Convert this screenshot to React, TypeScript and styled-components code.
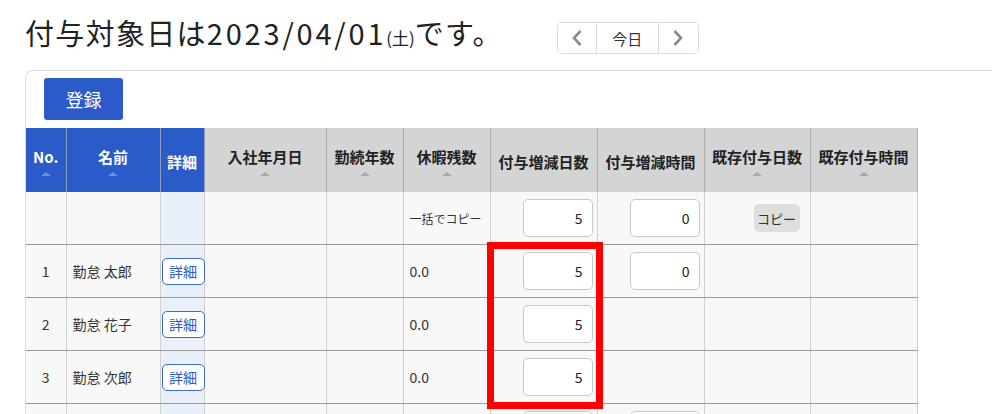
import styled, { createGlobalStyle } from "styled-components"

const GlobalStyle = createGlobalStyle`
  html, body {
    margin: 0;
    padding: 0;
    overflow: hidden;
    background: #fff;
    font-family: "Noto Sans CJK JP", "Noto Sans", sans-serif;
    color: #222;
  }
`

type Col = { label: string; width: number; blue?: boolean; sort?: boolean }

const columns: Col[] = [
  { label: "No.", width: 40, blue: true, sort: true },
  { label: "名前", width: 94, blue: true, sort: true },
  { label: "詳細", width: 44, blue: true },
  { label: "入社年月日", width: 122, sort: true },
  { label: "勤続年数", width: 77, sort: true },
  { label: "休暇残数", width: 87, sort: true },
  { label: "付与増減日数", width: 107 },
  { label: "付与増減時間", width: 107 },
  { label: "既存付与日数", width: 106, sort: true },
  { label: "既存付与時間", width: 107, sort: true },
]

type Row = { no?: number; name?: string; rest?: string; days: string; hours?: string }

const rows: Row[] = [
  { no: 1, name: "勤怠 太郎", rest: "0.0", days: "5", hours: "0" },
  { no: 2, name: "勤怠 花子", rest: "0.0", days: "5" },
  { no: 3, name: "勤怠 次郎", rest: "0.0", days: "5" },
  { days: "5", hours: "0" },
]

export default function App() {
  return (
    <>
      <GlobalStyle />
      <Page>
        <TitleBar>
          <Title>
            付与対象日は<DateText>2023/04/01</DateText>
            <Weekday>(土)</Weekday>です。
          </Title>
          <NavGroup>
            <NavButton $narrow>
              <svg width="14" height="18" viewBox="0 0 14 18">
                <polyline points="10.5,2 4,9 10.5,16" fill="none" stroke="#8a8a8a" strokeWidth="2.6" />
              </svg>
            </NavButton>
            <NavButton>今日</NavButton>
            <NavButton $narrow>
              <svg width="14" height="18" viewBox="0 0 14 18">
                <polyline points="3.5,2 10,9 3.5,16" fill="none" stroke="#8a8a8a" strokeWidth="2.6" />
              </svg>
            </NavButton>
          </NavGroup>
        </TitleBar>

        <Card>
          <RegisterButton>登録</RegisterButton>
          <TableWrap>
            <Table>
              <colgroup>
                {columns.map((c) => (
                  <col key={c.label} style={{ width: c.width }} />
                ))}
              </colgroup>
              <thead>
                <tr>
                  {columns.map((c) => (
                    <Th key={c.label} $blue={c.blue}>
                      <HeadInner>
                        <span>{c.label}</span>
                        {c.sort && <SortArrow $blue={c.blue} />}
                      </HeadInner>
                    </Th>
                  ))}
                </tr>
              </thead>
              <tbody>
                <tr>
                  <Td />
                  <Td />
                  <DetailTd />
                  <Td />
                  <Td />
                  <Td><SmallNote>一括でコピー</SmallNote></Td>
                  <InputTd><NumInput defaultValue="5" /></InputTd>
                  <InputTd><NumInput defaultValue="0" /></InputTd>
                  <Td $align="right"><CopyButton>コピー</CopyButton></Td>
                  <Td />
                </tr>
                {rows.map((r, i) => (
                  <tr key={i}>
                    <Td $align="center">{r.no}</Td>
                    <Td>{r.name}</Td>
                    <DetailTd>{r.name && <DetailButton>詳細</DetailButton>}</DetailTd>
                    <Td />
                    <Td />
                    <Td>{r.rest}</Td>
                    <InputTd><NumInput defaultValue={r.days} /></InputTd>
                    <InputTd>{r.hours !== undefined && <NumInput defaultValue={r.hours} />}</InputTd>
                    <Td />
                    <Td />
                  </tr>
                ))}
              </tbody>
            </Table>
            <Highlight />
          </TableWrap>
        </Card>
      </Page>
    </>
  )
}

const Page = styled.div`
  padding: 12px 0 0 25px;
`

const TitleBar = styled.div`
  display: flex;
  align-items: flex-start;
  height: 40px;
`

const Title = styled.h1`
  margin: 0;
  height: 40px;
  font-size: 29px;
  font-weight: normal;
  line-height: 40px;
  letter-spacing: 1.3px;
  color: #222;
  white-space: nowrap;
`

const DateText = styled.span`
  letter-spacing: 2.8px;
`

const Weekday = styled.span`
  font-size: 17px;
  line-height: 1;
  letter-spacing: 0;
`

const NavGroup = styled.div`
  display: flex;
  margin: 10px 0 0 54px;
  border: 1px solid #ddd;
  border-radius: 5px;
  height: 32px;
  box-sizing: border-box;
  overflow: hidden;
`

const NavButton = styled.button<{ $narrow?: boolean }>`
  width: ${(p) => (p.$narrow ? "39px" : "62px")};
  border: none;
  border-right: 1px solid #ddd;
  background: #fff;
  font-family: inherit;
  font-size: 15px;
  color: #333;
  display: flex;
  align-items: center;
  justify-content: center;
  padding: 0;
  &:last-child {
    border-right: none;
  }
`

const Card = styled.div`
  margin-top: 18px;
  margin-right: -20px;
  border: 1px solid #ddd;
  border-right: none;
  border-radius: 8px 0 0 0;
  padding-top: 7px;
  height: 400px;
`

const RegisterButton = styled.button`
  display: block;
  margin-left: 18px;
  width: 79px;
  height: 42px;
  border: none;
  border-radius: 3px;
  background: #2a5bc8;
  color: #fff;
  font-family: inherit;
  font-size: 18px;
`

const TableWrap = styled.div`
  position: relative;
  margin-top: 8px;
`

const Table = styled.table`
  border-collapse: collapse;
  table-layout: fixed;
  width: 891px;
  font-size: 14px;
`

const Th = styled.th<{ $blue?: boolean }>`
  height: 64px;
  padding: 0 2px;
  background: ${(p) => (p.$blue ? "#2a5bc8" : "#d3d5d5")};
  color: ${(p) => (p.$blue ? "#fff" : "#222")};
  border-right: 1px solid ${(p) => (p.$blue ? "#8d9cc0" : "#aeb0b0")};
  font-size: 15px;
  font-weight: bold;
  vertical-align: middle;
  white-space: nowrap;
`

const HeadInner = styled.div`
  display: flex;
  flex-direction: column;
  align-items: center;
  line-height: 20px;
  margin-top: 4px;
`

const SortArrow = styled.span<{ $blue?: boolean }>`
  display: block;
  width: 0;
  height: 0;
  margin-top: 5px;
  margin-bottom: 2px;
  border-left: 5px solid transparent;
  border-right: 5px solid transparent;
  border-bottom: 4px solid ${(p) => (p.$blue ? "#6f8fd6" : "#a9abab")};
`

const Td = styled.td<{ $align?: "left" | "center" | "right" }>`
  height: 52px;
  padding: 0 6px;
  background: #f8f8f8;
  border-right: 1px solid #cfcfcf;
  border-bottom: 1px solid #9a9a9a;
  text-align: ${(p) => p.$align ?? "left"};
  color: #333;
  white-space: nowrap;
  ${(p) => (p.$align === "right" ? "padding-right: 10px;" : "")}
`

const DetailTd = styled(Td)`
  background: #e8f0fc;
  padding: 0 0 0 1px;
`

const InputTd = styled(Td)`
  text-align: right;
  padding-right: 4px;
`

const NumInput = styled.input`
  width: 70px;
  height: 38px;
  box-sizing: border-box;
  border: 1px solid #c8c8c8;
  border-radius: 5px;
  padding: 0 9px;
  text-align: right;
  font-family: inherit;
  font-size: 14px;
  color: #222;
  background: #fff;
  vertical-align: middle;
`

const SmallNote = styled.span`
  font-size: 12px;
  color: #333;
`

const CopyButton = styled.button`
  width: 46px;
  height: 28px;
  border: none;
  border-radius: 5px;
  background: #dedede;
  color: #333;
  font-family: inherit;
  font-size: 13px;
  padding: 0;
`

const DetailButton = styled.button`
  width: 43px;
  height: 27px;
  border: 1px solid #3f6bd0;
  border-radius: 5px;
  background: #fff;
  color: #2a5bc8;
  font-family: inherit;
  font-size: 14px;
  padding: 0;
`

const Highlight = styled.div`
  position: absolute;
  left: 461px;
  top: 114px;
  width: 116px;
  height: 167px;
  box-sizing: border-box;
  border: 7px solid #ff0000;
  pointer-events: none;
`
